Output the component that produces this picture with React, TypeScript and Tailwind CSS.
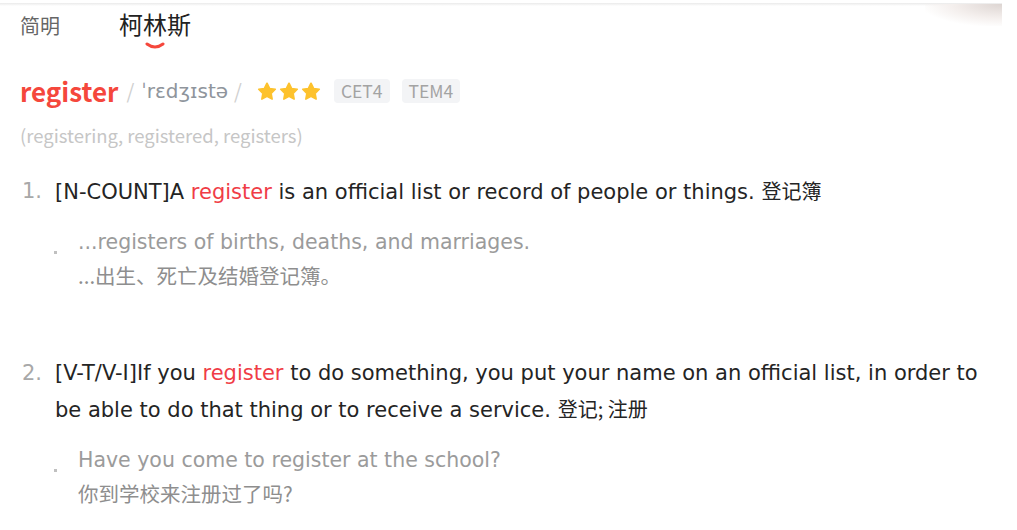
import React from 'react';

const cjk = "font-['Noto_Sans_CJK_SC',sans-serif]";
const body = "font-['DejaVu_Sans','Noto_Sans_CJK_SC',sans-serif]";

const Star = () => (
  <svg width="20" height="19" viewBox="0 0 24 23">
    <path
      d="M12 1.5l3.1 6.3 6.9 1-5 4.9 1.2 6.9L12 17.3l-6.2 3.3L7 13.7 2 8.8l6.9-1z"
      fill="#fdc22d"
      stroke="#fdc22d"
      strokeWidth="2"
      strokeLinejoin="round"
    />
  </svg>
);

const Tag = ({ label }: { label: string }) => (
  <span className={`${cjk} h-[24px] px-[7px] flex items-center rounded-[4px] bg-[#f3f4f6] text-[#a3a3a3] text-[17.5px]`}>
    {label}
  </span>
);

const Definition = ({
  num,
  label,
  after,
  zh,
  exEn,
  exZh,
}: {
  num: string;
  label: string;
  after: string;
  zh: string;
  exEn: string;
  exZh: string;
}) => (
  <div className="flex flex-col">
    <div className="flex">
      <div className={`${body} w-[35px] shrink-0 text-[#a8a8a8] text-[21px] leading-[36px] pl-[2px]`}>{num}</div>
      <p className={`${body} text-[#242424] text-[21px] leading-[36px] pr-[24px]`}>
        {label}
        <span className="text-[#f03c46]">register</span>
        {after} <span className={`${cjk} text-[20px]`}>{zh}</span>
      </p>
    </div>
    <div className="flex mt-[15px]">
      <div className="w-[35px] shrink-0 relative">
        <span className="absolute left-[34px] top-[26px] w-[3px] h-[3px] bg-[#c0c0c0]" />
      </div>
      <div className="pl-[23px] flex flex-col">
        <p className={`${body} text-[#9b9b9b] text-[20.5px] leading-[34px]`}>{exEn}</p>
        <p className={`${cjk} text-[#8e8e8e] text-[20.5px] leading-[32px]`}>{exZh}</p>
      </div>
    </div>
  </div>
);

export default function App() {
  return (
    <div className="w-[1017px] h-[530px] bg-white relative overflow-hidden">
      <div className="absolute left-0 top-[3px] w-[1002px] h-[3px] bg-gradient-to-b from-[#eaeaea] to-white" />
      <div className="absolute left-[925px] top-[4px] w-[77px] h-[22px] bg-[radial-gradient(ellipse_at_top_right,#ddd5d2,#f4efed_45%,rgba(255,255,255,0)_75%)]" />

      <div className="flex items-end pl-[20px] pt-[10px] h-[40px]">
        <span className={`${cjk} text-[#666] text-[20px] leading-[28px]`}>简明</span>
        <div className="ml-[59px] relative">
          <span className={`${cjk} text-[#222] text-[24px] leading-[32px]`}>柯林斯</span>
          <svg className="absolute left-[26px] top-[34px]" width="20" height="8" viewBox="0 0 20 8">
            <path d="M2 2 Q10 8 18 2" fill="none" stroke="#f5473c" strokeWidth="3" strokeLinecap="round" />
          </svg>
        </div>
      </div>

      <div className="flex items-center pl-[20px] mt-[34px] h-[34px]">
        <span className={`${cjk} text-[#f5473c] text-[26px] font-bold leading-[34px]`}>register</span>
        <span className={`${cjk} text-[#d0d0d0] text-[20px] ml-[8px]`}>/</span>
        <span className={`${body} text-[#8f959c] text-[20px] ml-[7px]`}>ˈrɛdʒɪstə</span>
        <span className={`${cjk} text-[#d0d0d0] text-[20px] ml-[6px]`}>/</span>
        <div className="flex items-center gap-[2px] ml-[15px]">
          <Star />
          <Star />
          <Star />
        </div>
        <div className="flex items-center gap-[12px] ml-[13px]">
          <Tag label="CET4" />
          <Tag label="TEM4" />
        </div>
      </div>

      <p className={`${cjk} pl-[20px] mt-[14px] text-[#c6c6c6] text-[18.5px] leading-[26px]`}>
        (registering, registered, registers)
      </p>

      <div className="pl-[20px] mt-[25px] flex flex-col">
        <Definition
          num="1."
          label="[N-COUNT]A "
          after=" is an official list or record of people or things."
          zh="登记簿"
          exEn="...registers of births, deaths, and marriages."
          exZh="...出生、死亡及结婚登记簿。"
        />
        <div className="h-[64px]" />
        <Definition
          num="2."
          label="[V-T/V-I]If you "
          after=" to do something, you put your name on an official list, in order to be able to do that thing or to receive a service."
          zh="登记; 注册"
          exEn="Have you come to register at the school?"
          exZh="你到学校来注册过了吗?"
        />
      </div>
    </div>
  );
}
